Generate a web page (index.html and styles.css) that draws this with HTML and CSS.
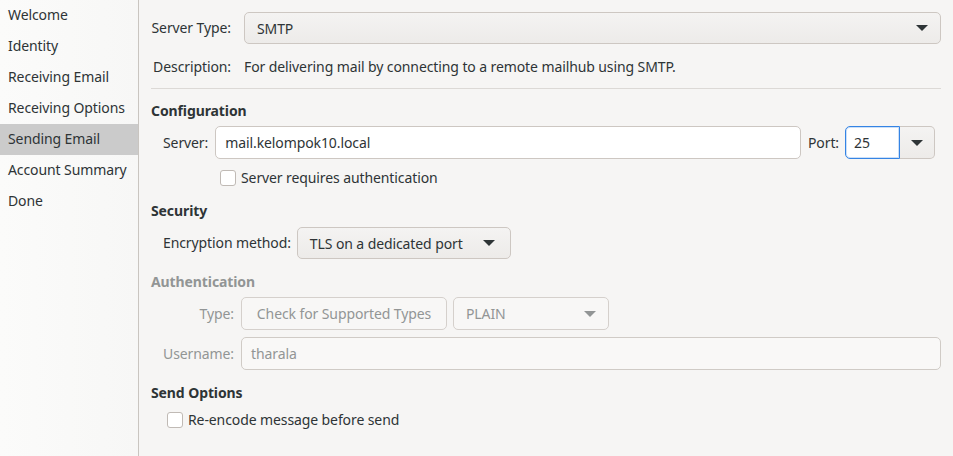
FILE: index.html
```html
<!DOCTYPE html>
<html>
<head>
<meta charset="utf-8">
<link rel="stylesheet" href="styles.css">
</head>
<body>
<div class="window">
  <nav class="sidebar">
    <div class="side-item">Welcome</div>
    <div class="side-item">Identity</div>
    <div class="side-item">Receiving Email</div>
    <div class="side-item">Receiving Options</div>
    <div class="side-item selected">Sending Email</div>
    <div class="side-item">Account Summary</div>
    <div class="side-item">Done</div>
  </nav>
  <main class="main">
    <div class="row row-type">
      <span class="lbl lbl-top">Server Type:</span>
      <div class="combo combo-wide"><span>SMTP</span><span class="arrow"></span></div>
    </div>
    <div class="row row-desc">
      <span class="lbl lbl-top">Description:</span>
      <span class="desc">For delivering mail by connecting to a remote mailhub using SMTP.</span>
    </div>
    <div class="sep"></div>

    <div class="heading h-config">Configuration</div>
    <div class="row row-server">
      <span class="lbl lbl-server">Server:</span>
      <div class="entry entry-server">mail.kelompok10.local</div>
      <span class="lbl lbl-port">Port:</span>
      <div class="spin">
        <div class="spin-entry">25</div>
        <div class="spin-btn"><span class="arrow"></span></div>
      </div>
    </div>
    <label class="check check-auth"><span class="box"></span>Server requires authentication</label>

    <div class="heading h-sec">Security</div>
    <div class="row row-enc">
      <span class="lbl lbl-enc">Encryption method:</span>
      <div class="combo combo-enc"><span>TLS on a dedicated port</span><span class="arrow"></span></div>
    </div>

    <div class="heading disabled h-auth">Authentication</div>
    <div class="row row-atype disabled">
      <span class="lbl lbl-auth">Type:</span>
      <div class="button btn-check">Check for Supported Types</div>
      <div class="combo combo-plain"><span>PLAIN</span><span class="arrow"></span></div>
    </div>
    <div class="row row-user disabled">
      <span class="lbl lbl-auth">Username:</span>
      <div class="entry entry-user">tharala</div>
    </div>

    <div class="heading h-send">Send Options</div>
    <label class="check check-send"><span class="box"></span>Re-encode message before send</label>
  </main>
</div>
</body>
</html>
```
FILE: styles.css
```css
* { box-sizing: border-box; }
html, body { margin: 0; padding: 0; }
body {
  font-family: "Noto Sans", "Open Sans", sans-serif;
  font-size: 14px;
  letter-spacing: -0.1px;
  color: #2e3436;
  background: #f6f5f4;
  width: 953px;
  height: 456px;
  overflow: hidden;
}
.window { display: flex; height: 456px; }
.sidebar {
  width: 139px;
  flex: none;
  background: linear-gradient(to right, #fbfbfa, #f7f7f6);
  border-right: 1px solid #c9c5c0;
}
.side-item {
  height: 31px;
  line-height: 30px;
  padding-left: 8px;
  white-space: nowrap;
}
.side-item.selected { background: #cbcbcb; }
.main {
  flex: 1;
  padding: 12px 12px 0 12px;
  display: flex;
  flex-direction: column;
}
.row { display: flex; align-items: center; }
.lbl { white-space: nowrap; line-height: 20px; }
.lbl-top { width: 80px; text-align: right; margin-right: 13px; }
.row-type { height: 32px; }
.row-desc { margin-top: 13px; height: 20px; }
.desc { line-height: 20px; }
.sep { margin-top: 11px; height: 1px; background: #dcd9d6; }
.heading { font-weight: bold; line-height: 20px; height: 20px; }
.heading.disabled { color: #929595; }
.h-config { margin-top: 12px; }
.combo {
  height: 32px;
  border: 1px solid #cdc7c2;
  border-radius: 5px;
  background: linear-gradient(to bottom, #f4f3f2, #edebe9);
  display: flex;
  align-items: center;
  justify-content: space-between;
  padding: 0 12px;
}
.combo-wide { flex: 1; }
.arrow {
  width: 0; height: 0;
  border-left: 6px solid transparent;
  border-right: 6px solid transparent;
  border-top: 6px solid #2e3436;
}
.entry {
  height: 33px;
  border: 1px solid #cdc7c2;
  border-radius: 5px;
  background: #ffffff;
  line-height: 31px;
  padding: 0 9px;
}
.row-server { margin-top: 5px; height: 33px; padding-left: 12px; }
.lbl-server { margin-right: 7px; }
.entry-server { flex: 1; }
.lbl-port { margin-left: 7px; margin-right: 6px; }
.spin { display: flex; height: 33px; width: 90px; margin-right: 6px; }
.spin-entry {
  width: 55px;
  border: 1px solid #3584e4;
  border-radius: 5px 0 0 5px;
  background: #fff;
  line-height: 31px;
  padding-left: 8px;
  box-shadow: inset 0 0 0 1px rgba(53,132,228,0.25);
}
.spin-btn {
  flex: 1;
  border: 1px solid #cdc7c2;
  border-left: none;
  border-radius: 0 5px 5px 0;
  background: linear-gradient(to bottom, #f4f3f2, #edebe9);
  display: flex; align-items: center; justify-content: center;
}
.check { display: flex; align-items: center; line-height: 20px; height: 20px; }
.box {
  width: 16px; height: 16px;
  border: 1px solid #c0bab5;
  border-radius: 3px;
  background: #fff;
  margin-right: 5px;
}
.check-auth { margin-top: 9px; padding-left: 69px; }
.h-sec { margin-top: 13px; }
.row-enc { margin-top: 6px; height: 32px; padding-left: 12px; }
.lbl-enc { margin-right: 6px; }
.combo-enc { width: 214px; padding: 0 15px 0 12px; }
.h-auth { margin-top: 13px; }
.disabled { color: #929595; }
.disabled .arrow { border-top-color: #929595; }
.lbl-auth { width: 83px; text-align: right; margin-right: 7px; }
.row-atype { margin-top: 5px; height: 33px; }
.button {
  height: 33px;
  border: 1px solid #d5d0cc;
  border-radius: 5px;
  background: #f8f7f6;
  line-height: 31px;
  text-align: center;
}
.btn-check { width: 206px; }
.row-atype .combo { height: 33px; background: #f8f7f6; border-color: #d5d0cc; margin-left: 6px; width: 156px; padding: 0 12px; }
.row-user { margin-top: 7px; height: 33px; }
.entry-user { flex: 1; background: #f9f8f7; border-color: #d0cbc6; color: #929595; }
.h-send { margin-top: 13px; }
.check-send { margin-top: 7px; padding-left: 16px; }
```
